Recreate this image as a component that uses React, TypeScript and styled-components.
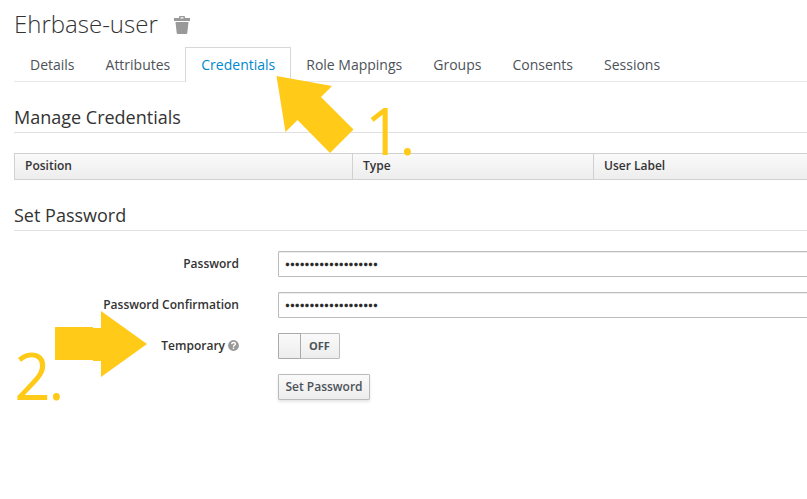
import React from "react";
import styled, { createGlobalStyle } from "styled-components";

const GlobalStyle = createGlobalStyle`
  * { box-sizing: border-box; }
  body {
    margin: 0;
    background: #fff;
    overflow: hidden;
    color: #333;
    font: 12px/17px "Open Sans", Arial, sans-serif;
  }
`;

const Page = styled.main`
  position: relative;
  width: 807px;
  height: 499px;
  padding: 10px 0 0 14px;
  overflow: hidden;
`;

const TitleRow = styled.header`
  display: flex;
  align-items: flex-start;
  height: 37px;
`;

const Title = styled.h1`
  margin: 0;
  font-size: 24px;
  font-weight: 300;
  line-height: 28px;
  white-space: nowrap;
  width: 160px;
`;

const TrashIcon = styled.svg`
  display: block;
  margin-top: 6px;
`;

const Tabs = styled.nav`
  display: flex;
  height: 35px;
  border-bottom: 1px solid #e9e8e8;
`;

const Tab = styled.a<{ $active?: boolean }>`
  height: ${(p) => (p.$active ? 35 : 34)}px;
  margin-right: -1px;
  padding: 5px 15px 0;
  border: 1px solid ${(p) => (p.$active ? "#d8d8d8" : "transparent")};
  border-bottom: 0;
  background: ${(p) => (p.$active ? "#fff" : "transparent")};
  color: ${(p) => (p.$active ? "#0088ce" : "#4d5258")};
  font-size: 14px;
  line-height: 23px;
  white-space: nowrap;
`;

const SectionTitle = styled.h2<{ $top: number }>`
  margin: ${(p) => p.$top}px 0 0;
  height: 28px;
  border-bottom: 1px solid #e0e0e0;
  font-size: 18px;
  font-weight: 400;
  line-height: 24px;
`;

const HeaderRow = styled.div`
  display: grid;
  grid-template-columns: 337px 241px 1fr;
  margin-top: 20px;
  height: 27px;
  border: 1px solid #d1d1d1;
  border-right: 0;
  background: linear-gradient(#fafafa, #ededed);
`;

const HeaderCell = styled.div`
  padding: 3px 10px 0;
  font-weight: 600;
  & + & { border-left: 1px solid #d1d1d1; }
`;

const Form = styled.form`
  display: grid;
  grid-template-columns: 225px 1fr;
  column-gap: 39px;
  row-gap: 15px;
  margin-top: 20px;
`;

const Label = styled.label`
  display: flex;
  align-items: center;
  justify-content: flex-end;
  height: 25px;
  gap: 3px;
  font-weight: 600;
  white-space: nowrap;
`;

const HelpIcon = styled.svg`
  display: block;
`;

const Input = styled.input`
  width: 570px;
  height: 26px;
  padding: 2px 6px;
  border: 1px solid #bbb;
  border-radius: 1px;
  outline: 0;
  color: #222;
  font: 13px/17px "Open Sans", Arial, sans-serif;
  -webkit-text-stroke: 0.6px #222;
  box-shadow: inset 0 1px 1px rgba(3, 3, 3, 0.075);
`;

const Switch = styled.div`
  display: flex;
  width: 62px;
  height: 26px;
  border: 1px solid #bbb;
  border-radius: 1px;
  background: linear-gradient(#fafafa, #ededed);
`;

const SwitchHandle = styled.span`
  box-sizing: content-box;
  width: 21px;
  margin: -1px 0 -1px -1px;
  border: 1px solid #aaa;
  border-radius: 1px;
`;

const SwitchText = styled.span`
  flex: 1;
  padding-right: 1px;
  text-align: center;
  color: #4d5258;
  font-size: 11px;
  font-weight: 700;
  line-height: 24px;
`;

const Button = styled.button`
  grid-column: 2;
  justify-self: start;
  width: 92px;
  height: 26px;
  padding: 0 0 2px;
  border: 1px solid #bbb;
  border-radius: 1px;
  background: linear-gradient(#fafafa, #ededed);
  box-shadow: 0 2px 3px rgba(3, 3, 3, 0.1);
  color: #4d5258;
  font: 600 12px/17px "Open Sans", Arial, sans-serif;
`;

const ArrowLayer = styled.svg`
  position: absolute;
  inset: 0;
  fill: #ffca18;
  pointer-events: none;
`;

const StepNumber = styled.span<{ $x: number; $y: number }>`
  position: absolute;
  left: ${(p) => p.$x}px;
  top: ${(p) => p.$y}px;
  color: #ffca18;
  font-size: 62px;
  font-weight: 300;
  line-height: 46px;
  letter-spacing: -1.5px;
  -webkit-text-stroke: 2px #ffca18;
`;

const tabs = ["Details", "Attributes", "Credentials", "Role Mappings", "Groups", "Consents", "Sessions"];

export default function App() {
  return (
    <>
      <GlobalStyle />
      <Page>
        <TitleRow>
          <Title>Ehrbase-user</Title>
          <TrashIcon width="16" height="19" viewBox="0 0 16 19" fill="#999">
            <path
              d="M0 2h5V1q0-1 1-1h4q1 0 1 1v1h5v3H0zM6.5 1.3V2.4h3V1.3zM1.5 6h13L13.3 17q-.2 1-1 1H3.7q-.8 0-1-1z"
              fillRule="evenodd"
            />
          </TrashIcon>
        </TitleRow>
        <Tabs>
          {tabs.map((name) => (
            <Tab key={name} $active={name === "Credentials"}>{name}</Tab>
          ))}
        </Tabs>
        <SectionTitle $top={23}>Manage Credentials</SectionTitle>
        <HeaderRow>
          <HeaderCell>Position</HeaderCell>
          <HeaderCell>Type</HeaderCell>
          <HeaderCell>User Label</HeaderCell>
        </HeaderRow>
        <SectionTitle $top={23}>Set Password</SectionTitle>
        <Form>
          <Label htmlFor="password">Password</Label>
          <Input id="password" type="password" defaultValue="ehrbase-user-secret" />
          <Label htmlFor="confirmation">Password Confirmation</Label>
          <Input id="confirmation" type="password" defaultValue="ehrbase-user-secret" />
          <Label as="div">
            Temporary
            <HelpIcon width="11" height="11" viewBox="0 0 11 11">
              <circle cx="5.5" cy="5.5" r="5.4" fill="#999" />
              <path d="M3.6 4.2Q3.9 2.5 5.6 2.5T7.4 4.1Q7.4 4.9 6.4 5.4Q5.5 5.9 5.5 6.7M5.5 7.5V9" fill="none" stroke="#fff" strokeWidth="1.4" />
            </HelpIcon>
          </Label>
          <Switch>
            <SwitchHandle />
            <SwitchText>OFF</SwitchText>
          </Switch>
          <Button type="button">Set Password</Button>
        </Form>
        <ArrowLayer width="807" height="499" viewBox="0 0 807 499">
          <path d="M276.5 76L332 86L321 97L353.5 129.5L330 153L297.5 120L285.5 132Z" />
          <path d="M55 327H93V328H101V311L147 344L101 377V361H93V360H55Z" />
        </ArrowLayer>
        <StepNumber $x={366} $y={107}>1.</StepNumber>
        <StepNumber $x={15} $y={352}>2.</StepNumber>
      </Page>
    </>
  );
}
